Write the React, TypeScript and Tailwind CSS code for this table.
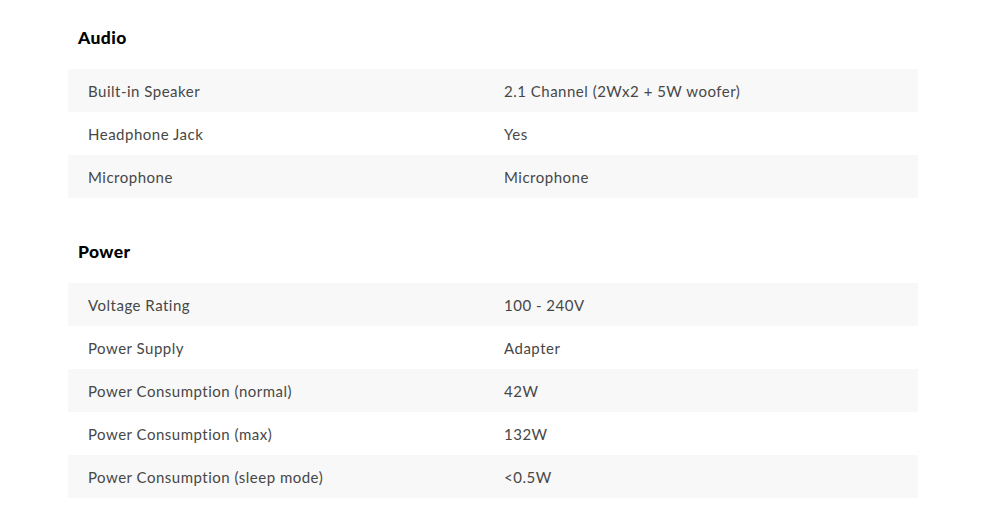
const sections = [
  {
    title: 'Audio',
    rows: [
      ['Built-in Speaker', '2.1 Channel (2Wx2 + 5W woofer)'],
      ['Headphone Jack', 'Yes'],
      ['Microphone', 'Microphone'],
    ],
  },
  {
    title: 'Power',
    rows: [
      ['Voltage Rating', '100 - 240V'],
      ['Power Supply', 'Adapter'],
      ['Power Consumption (normal)', '42W'],
      ['Power Consumption (max)', '132W'],
      ['Power Consumption (sleep mode)', '<0.5W'],
    ],
  },
];

export default function App() {
  return (
    <div className="w-[1000px] h-[527px] bg-white font-['Lato',sans-serif] overflow-hidden">
      <div className="pl-[68px] pr-[82px] pt-[26px] flex flex-col gap-[42px]">
        {sections.map((s) => (
          <section key={s.title}>
            <h2 className="pl-[10px] h-[24px] leading-[24px] text-[17.5px] tracking-[0.4px] font-black text-black">
              {s.title}
            </h2>
            <div className="mt-[19px]">
              {s.rows.map(([label, value], i) => (
                <div
                  key={label}
                  className={`grid grid-cols-[436px_1fr] h-[43px] pt-[2px] items-center text-[15px] tracking-[0.5px] text-[#474747] ${
                    i % 2 === 0 ? 'bg-[#f8f8f8]' : 'bg-white'
                  }`}
                >
                  <div className="pl-5">{label}</div>
                  <div>{value}</div>
                </div>
              ))}
            </div>
          </section>
        ))}
      </div>
    </div>
  );
}
